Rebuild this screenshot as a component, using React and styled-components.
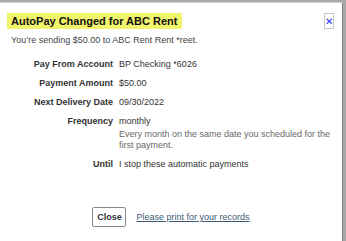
import React from 'react';
import styled, { createGlobalStyle } from 'styled-components';

const Global = createGlobalStyle`
  html, body {
    margin: 0;
    padding: 0;
    background: #a9a9a9;
    font-family: "Liberation Sans", Arial, sans-serif;
  }
`;

const Dialog = styled.div`
  box-sizing: border-box;
  width: 343px;
  height: 239px;
  margin-top: 2px;
  background: #ffffff;
  border-top: 1px solid #cfcfcf;
  border-right: 1px solid #7d7d7d;
  padding: 10px 0 0 7px;
  display: flex;
  flex-direction: column;
`;

const Header = styled.div`
  display: flex;
  justify-content: space-between;
  align-items: flex-start;
  padding-right: 8px;
`;

const Title = styled.h1`
  margin: 0;
  padding: 0 5px 0 4px;
  height: 16px;
  line-height: 16px;
  background: #f2f46c;
  font-size: 11px;
  font-weight: bold;
  color: #111;
`;

const CloseX = styled.button`
  box-sizing: border-box;
  width: 10px;
  height: 16px;
  padding: 0;
  border: 1px solid #c8c8c8;
  background: #fff;
  color: #1b2cf0;
  font-family: "DejaVu Sans", sans-serif;
  font-size: 10px;
  font-weight: bold;
  line-height: 13px;
  cursor: pointer;
`;

const Sub = styled.p`
  margin: 6px 0 0 4px;
  font-size: 9px;
  line-height: 11px;
  color: #444;
`;

const Details = styled.div`
  margin-top: 13px;
  display: grid;
  grid-template-columns: 106px 1fr;
  column-gap: 6px;
  row-gap: 8px;
  padding-right: 2px;
  font-size: 9px;
  line-height: 11px;
`;

const Label = styled.div`
  text-align: right;
  font-weight: bold;
  color: #333;
`;

const Value = styled.div`
  color: #333;
`;

const Note = styled.div`
  margin-top: 2px;
  padding-right: 8px;
  color: #6a6a6a;
`;

const Footer = styled.div`
  margin-top: 37px;
  display: flex;
  justify-content: center;
  align-items: center;
  gap: 10px;
  padding-right: 7px;
`;

const Button = styled.button`
  box-sizing: border-box;
  width: 34px;
  height: 20px;
  padding: 0;
  border: 1px solid #8a8a8a;
  border-radius: 2px;
  background: #fff;
  font-family: "Liberation Sans", Arial, sans-serif;
  font-size: 9px;
  font-weight: bold;
  color: #333;
`;

const Link = styled.a`
  font-size: 9px;
  color: #3d5a78;
  text-decoration: underline;
`;

const rows = [
  ['Pay From Account', 'BP Checking *6026'],
  ['Payment Amount', '$50.00'],
  ['Next Delivery Date', '09/30/2022'],
];

const App = () => {
  return (
    <>
      <Global />
      <Dialog>
        <Header>
          <Title>AutoPay Changed for ABC Rent</Title>
          <CloseX aria-label="close">✕</CloseX>
        </Header>
        <Sub>You’re sending $50.00 to ABC Rent Rent *reet.</Sub>
        <Details>
          {rows.map(([l, v]) => (
            <React.Fragment key={l}>
              <Label>{l}</Label>
              <Value>{v}</Value>
            </React.Fragment>
          ))}
          <Label>Frequency</Label>
          <Value>
            monthly
            <Note>Every month on the same date you scheduled for the first payment.</Note>
          </Value>
          <Label>Until</Label>
          <Value>I stop these automatic payments</Value>
        </Details>
        <Footer>
          <Button>Close</Button>
          <Link href="#">Please print for your records</Link>
        </Footer>
      </Dialog>
    </>
  );
};

export default App;
